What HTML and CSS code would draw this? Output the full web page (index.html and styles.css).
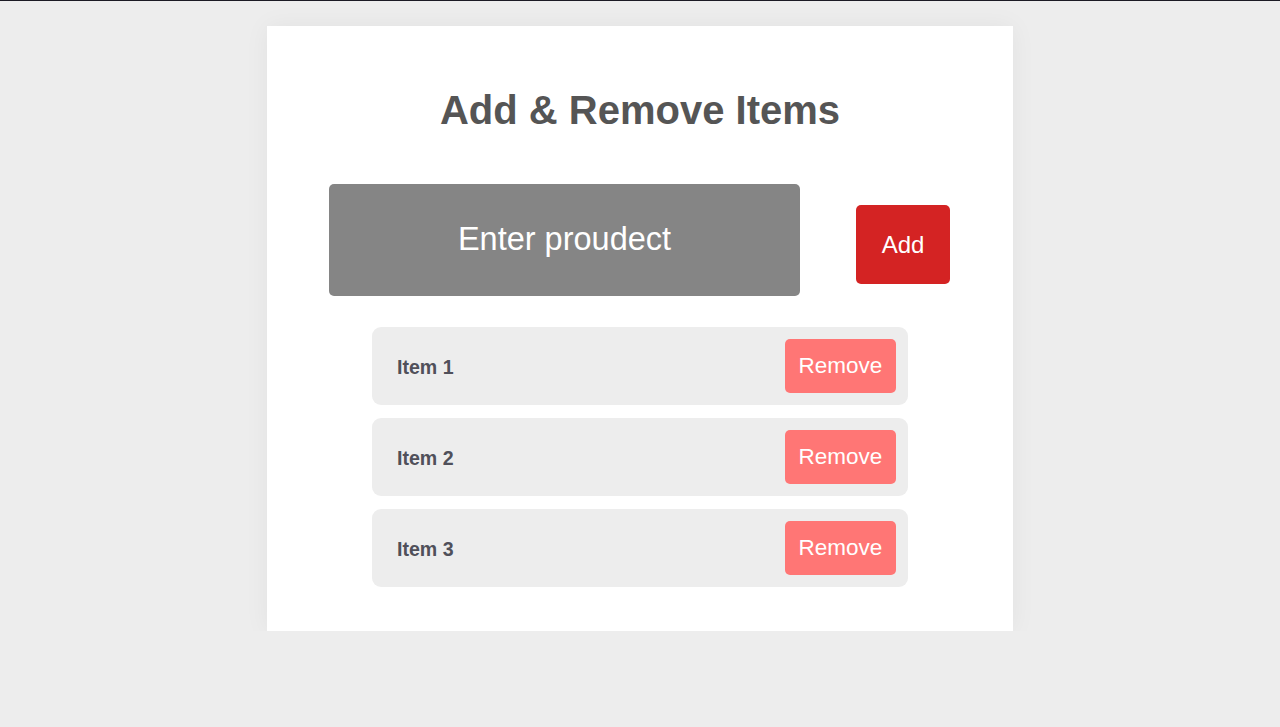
FILE: index.html
```html
<!DOCTYPE html>
<html>
<head>
<meta charset="utf-8">
<link rel="stylesheet" href="styles.css">
</head>
<body>
<div class="topline"></div>
<main class="card">
  <h1 class="title">Add &amp; Remove Items</h1>
  <div class="entry">
    <div class="field">Enter proudect</div>
    <button class="add">Add</button>
  </div>
  <ul class="list">
    <li class="item"><span class="label">Item 1</span><button class="remove">Remove</button></li>
    <li class="item"><span class="label">Item 2</span><button class="remove">Remove</button></li>
    <li class="item"><span class="label">Item 3</span><button class="remove">Remove</button></li>
  </ul>
</main>
</body>
</html>
```

FILE: styles.css
```css
html, body {
  margin: 0;
  padding: 0;
  background: #ededed;
  font-family: "Liberation Sans", Arial, sans-serif;
}
.topline {
  height: 1px;
  background: #1b1a24;
}
.card {
  width: 746px;
  height: 605px;
  margin: 25px auto 0;
  background: #ffffff;
  box-shadow: 0 0 24px rgba(0, 0, 0, 0.05);
  box-sizing: border-box;
  padding-top: 64px;
}
.title {
  margin: 0;
  text-align: center;
  font-size: 40px;
  line-height: 40px;
  font-weight: bold;
  color: #555555;
}
.entry {
  display: flex;
  align-items: flex-start;
  justify-content: space-between;
  margin: 54px 63px 0 62px;
}
.field {
  width: 471px;
  height: 112px;
  background: #858585;
  border-radius: 5px;
  color: #ffffff;
  font-size: 32.5px;
  display: flex;
  align-items: center;
  justify-content: center;
  padding-bottom: 2px;
  box-sizing: border-box;
}
.add {
  margin-top: 21px;
  width: 94px;
  height: 79px;
  background: #d42323;
  border: 0;
  border-radius: 5px;
  color: #ffffff;
  font-family: inherit;
  font-size: 24px;
  padding: 0;
}
.list {
  list-style: none;
  margin: 31px auto 0;
  padding: 0;
  width: 536px;
  display: flex;
  flex-direction: column;
  gap: 13px;
}
.item {
  height: 78px;
  background: #ededed;
  border-radius: 9px;
  display: flex;
  align-items: center;
  justify-content: space-between;
  padding: 0 12px 0 25px;
}
.label {
  font-size: 19.6px;
  font-weight: bold;
  color: #50505a;
  padding-top: 2px;
}
.remove {
  width: 111px;
  height: 54px;
  background: #ff7675;
  border: 0;
  border-radius: 5px;
  color: #ffffff;
  font-family: inherit;
  font-size: 22.5px;
  padding: 0;
}
```
